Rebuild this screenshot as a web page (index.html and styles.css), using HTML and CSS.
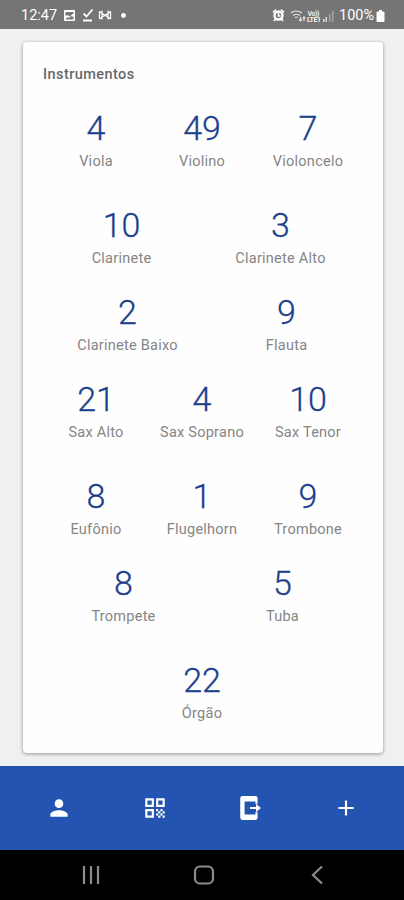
FILE: index.html
```
<!DOCTYPE html>
<html lang="pt">
<head>
<meta charset="utf-8">
<title>Instrumentos</title>
<link rel="stylesheet" href="styles.css">
</head>
<body>
<header class="status">
  <span class="clock">12:47</span>
  <svg class="status-left" width="66" height="16" viewBox="0 0 66 16">
    <path fill="#fff" fill-rule="evenodd" d="M3 2h9q1 0 1 1v9q0 1-1 1H3q-1 0-1-1V3q0-1 1-1zM3.500 4v4l2-1 2 1.500 4-3V4zM3.500 11.500h8V9L9 8l-2 2-1.500-1z"/>
    <path fill="none" stroke="#fff" stroke-width="1.800" d="M21.500 5.500l3 3 6-7M21 12.500h9"/>
    <path fill="none" stroke="#fff" stroke-width="1.200" d="M37.500 3v8M48.500 3v8M37.500 3.500l5.500 4 5.500-4M37.500 11l5.500-4 5.500 4M40 2.500v9M46 2.500v9"/>
    <circle cx="61.500" cy="7.500" r="2.400" fill="#fff"/>
  </svg>
  <div class="status-right">
    <svg width="64" height="16" viewBox="0 0 64 16">
      <circle cx="6.500" cy="7.500" r="4" fill="none" stroke="#fff" stroke-width="2.400"/>
      <path fill="none" stroke="#fff" stroke-width="1.600" d="M1 4.500l3-3M9 1.500l3 3M3.500 11L2 13M9.500 11l1.500 2M6.500 5v3h2"/>
      <path fill="none" stroke="#e4e4e4" stroke-width="1.200" d="M19 5q5-4 11 0M21 7.500q3.500-2.500 7 0M23 9.500q1.500-1 3 0M28.500 9v4M27 11.500l1.500 1.500 1.500-1.500M32 13V9M30.800 10.300L32 9l1.200 1.300"/>
      <text class="lte" x="35.500" y="7.500" textLength="12">Vo))</text>
      <text class="lte" x="35" y="14" textLength="14">LTE1</text>
      <path fill="#ddd" d="M51 11h1.500v3H51zM53.500 9H55v5h-1.500z"/>
      <path fill="#a5a5a5" d="M57 6h1.500v8H57zM60 3h1.500v11H60z"/>
    </svg>
    <span class="percent">100%</span>
    <svg width="9" height="14" viewBox="0 0 9 14"><path fill="#fff" d="M3 1h3v1.500h1.500q1 0 1 1V12q0 1-1 1h-6q-1 0-1-1V3.500q0-1 1-1H3z"/></svg>
  </div>
</header>
<main class="content">
  <section class="card">
    <h1 class="title">Instrumentos</h1>
    <div class="row tall three">
      <div class="item"><b>4</b><span>Viola</span></div>
      <div class="item"><b>49</b><span>Violino</span></div>
      <div class="item"><b>7</b><span>Violoncelo</span></div>
    </div>
    <div class="row pulled">
      <div class="item"><b>10</b><span>Clarinete</span></div>
      <div class="item"><b>3</b><span>Clarinete Alto</span></div>
    </div>
    <div class="row shifted">
      <div class="item"><b>2</b><span>Clarinete Baixo</span></div>
      <div class="item"><b>9</b><span>Flauta</span></div>
    </div>
    <div class="row tall three">
      <div class="item"><b>21</b><span>Sax Alto</span></div>
      <div class="item"><b>4</b><span>Sax Soprano</span></div>
      <div class="item"><b>10</b><span>Sax Tenor</span></div>
    </div>
    <div class="row three">
      <div class="item"><b>8</b><span>Eufônio</span></div>
      <div class="item"><b>1</b><span>Flugelhorn</span></div>
      <div class="item"><b>9</b><span>Trombone</span></div>
    </div>
    <div class="row tall nudged">
      <div class="item"><b>8</b><span>Trompete</span></div>
      <div class="item"><b>5</b><span>Tuba</span></div>
    </div>
    <div class="row one">
      <div class="item"><b>22</b><span>Órgão</span></div>
    </div>
  </section>
</main>
<nav class="tabs">
  <svg viewBox="0 0 24 24"><path d="M12 12c2.210 0 4-1.790 4-4s-1.790-4-4-4-4 1.790-4 4 1.790 4 4 4zm0 2c-2.670 0-8 1.340-8 4v2h16v-2c0-2.660-5.330-4-8-4z"/></svg>
  <svg viewBox="0 0 24 24"><path d="M3 11h8V3H3v8zm2-6h4v4H5V5zM3 21h8v-8H3v8zm2-6h4v4H5v-4zM13 3v8h8V3h-8zm6 6h-4V5h4v4zM19 19h2v2h-2zM13 13h2v2h-2zM15 15h2v2h-2zM13 17h2v2h-2zM15 19h2v2h-2zM17 17h2v2h-2zM17 13h2v2h-2zM19 15h2v2h-2z"/></svg>
  <svg viewBox="0 0 24 24"><path d="M5 1h12q2 0 2 2v5h-2V6H7v12h10v-2h2v5q0 2-2 2H5q-2 0-2-2V3q0-2 2-2zM17.500 8l4.500 4-4.500 4v-3H12v-2h5.500z"/></svg>
  <svg viewBox="0 0 24 24"><path d="M19 13h-6v6h-2v-6H5v-2h6V5h2v6h6v2z"/></svg>
</nav>
<footer class="system">
  <svg viewBox="0 0 24 24"><path d="M5 3v18M12 3v18M19 3v18"/></svg>
  <svg viewBox="0 0 24 24"><rect x="3" y="3.500" width="18" height="17" rx="5"/></svg>
  <svg viewBox="0 0 24 24"><path d="M17 3.500L8 12l9 8.500"/></svg>
</footer>
</body>
</html>
```
FILE: styles.css
```
* { box-sizing: border-box; }
body {
  margin: 0;
  width: 404px;
  height: 900px;
  display: flex;
  flex-direction: column;
  overflow: hidden;
  background: #f0f0f0;
  font-family: Roboto, sans-serif;
}
.status {
  height: 29px;
  flex: none;
  display: flex;
  align-items: center;
  padding: 2px 19px 0 21px;
  background: #757575;
  color: #fff;
}
.clock { width: 41px; font-size: 14.5px; }
.status-right { margin-left: auto; display: flex; align-items: center; }
.percent { width: 37px; margin-left: 3px; font-size: 14.5px; }
.lte { font: bold 7px Roboto, sans-serif; fill: #eee; }
.content { flex: 1; padding: 13px 21px 13px 23px; }
.card {
  height: 711px;
  padding: 23px 22px 0 20px;
  border-radius: 4px;
  background: #fefefe;
  box-shadow: 0 1px 3px 1px rgba(0, 0, 0, .25);
}
.title {
  margin: 0 0 23px;
  font-size: 14.5px;
  font-weight: 500;
  line-height: 20px;
  letter-spacing: .43px;
  color: #686868;
}
.row {
  height: 87px;
  display: grid;
  grid-template-columns: 1fr 1fr;
}
.three { grid-template-columns: 1fr 1fr 1fr; }
.one { grid-template-columns: 1fr; }
.tall { height: 97px; }
.pulled { margin: 0 1px 0 -1px; }
.shifted { margin: 0 -5px 0 5px; }
.nudged { margin: 0 -1px 0 1px; }
.item {
  display: flex;
  flex-direction: column;
  align-items: center;
  gap: 4px;
  white-space: nowrap;
}
.item b {
  font-size: 34px;
  font-weight: 300;
  line-height: 40px;
  color: #1c3f8c;
  -webkit-text-stroke: .3px #1c3f8c;
}
.item span {
  font-size: 14.5px;
  line-height: 20px;
  letter-spacing: .25px;
  color: #858585;
}
.tabs {
  height: 84px;
  flex: none;
  display: flex;
  align-items: center;
  justify-content: space-between;
  padding: 0 45px 0 46px;
  background: #2454b2;
}
.tabs svg { width: 26px; height: 26px; fill: #fff; }
.system {
  height: 50px;
  flex: none;
  display: flex;
  align-items: center;
  justify-content: space-between;
  padding: 0 75px 0 79px;
  background: #000;
}
.system svg { width: 24px; height: 24px; fill: none; stroke: #8c8c8c; stroke-width: 2.2; }
```
